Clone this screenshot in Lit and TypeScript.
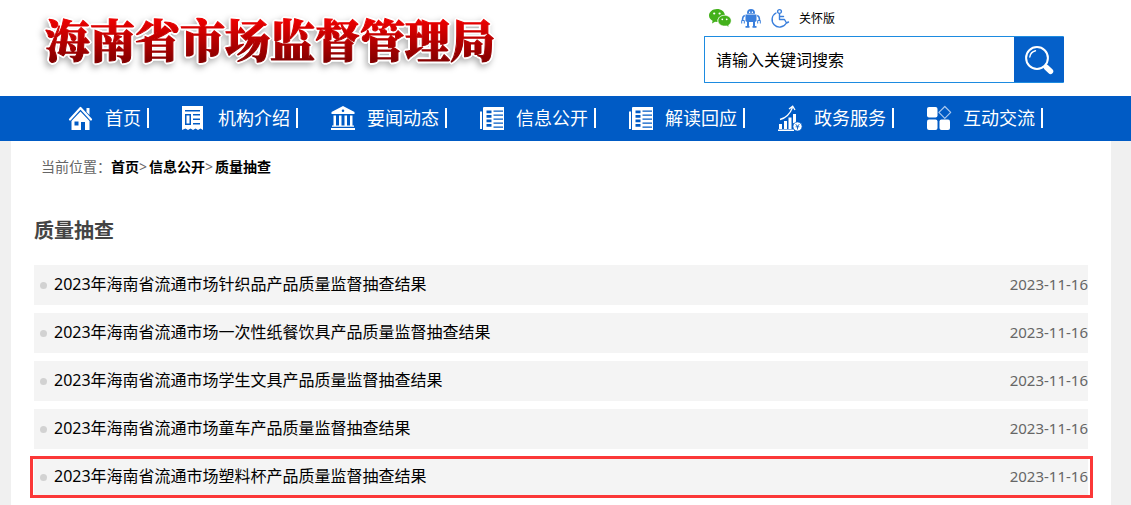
import { LitElement, html, css, svg } from "lit";
import { customElement } from "lit/decorators.js";

const newspaper = svg`
  <path d="M1 5.500h2V23H1z" fill="#fff"/>
  <path fill="#fff" fill-rule="evenodd" d="M5 1h20v23H4V2a1 1 0 0 1 1-1zM7.500 4.500v2.800h5V4.500zM7.500 9v2.800h5V9zM7.500 13.500v2.800h5v-2.800zM7.500 18v2.800h5V18zM14.500 4.500v1.200H24V4.500zM14.500 8.500v1.200H24V8.500zM14.500 12.500v1.200H24v-1.200zM14.500 16.500v1.200H24v-1.200zM14.500 20.500v1.200H24v-1.200z"/>`;

const icons = {
  home: svg`
    <path d="M2 13.500 12.500 2 23 13.500" fill="none" stroke="#fff" stroke-width="2.200" stroke-linecap="round" stroke-linejoin="round"/>
    <path d="M18.500 2h3v7l-3-3z" fill="#fff"/>
    <path fill="#fff" fill-rule="evenodd" d="M12.500 5.500 21.500 15v9H17v-8h-4v8H3.500v-9zM6.500 15.500v4h4v-4z"/>`,
  doc: svg`
    <path fill="#fff" fill-rule="evenodd" d="M1 0h21v24l-2.500-1.500L17 24l-2.500-1.500L12 24l-2.500-1.500L7 24l-2.500-1.500L1 24zM4 4v1.500h15V4zM4 8v11h6V8zM12 8v1.500h7V8zM12 12.500V14h7v-1.500zM12 17v1.500h7V17z"/>
    <path d="M5.500 9.500h3v8h-3z" fill="#fff"/>`,
  bank: svg`
    <path fill="#fff" fill-rule="evenodd" d="M13 0 24.500 6v2h-23V6zM13 3.500a1.300 1.300 0 1 0 0 2.600 1.300 1.300 0 0 0 0-2.600z"/>
    <path fill="#fff" d="M3.500 9.500H6V20H3.500zM9 9.500h2.500V20H9zM14.500 9.500H17V20h-2.500zM20 9.500h2.500V20H20zM2 19.500h22v1.200H2zM1 22h24v2H1z"/>`,
  news: newspaper,
  chart: svg`
    <path fill="#fff" d="M2 18h3v5H2zM7 15h3v8H7zM11.500 11.500h3V23h-3zM1 23.500h16V25H1z"/>
    <path fill="#fff" d="M16 8h3v9h-3z"/>
    <path d="M3 13.500C9 12 13 8 15.500 1.500M12 3 15.700.2 18 4" fill="none" stroke="#fff" stroke-width="1.300"/>
    <circle cx="20.500" cy="20.500" r="4.600" fill="#fff" stroke="#005bc5" stroke-width=".8"/>
    <path d="m18.700 18.200 1.800 2.200 1.800-2.200M18.700 20.800h3.600M20.500 20.500v3" fill="none" stroke="#005bc5" stroke-width="0.900"/>`,
  blocks: svg`
    <rect x="1" y="1" width="10.500" height="10.500" rx="2" fill="#fff"/>
    <rect x="1" y="13.500" width="10.500" height="10.500" rx="2" fill="#fff"/>
    <rect x="13.500" y="13.500" width="10.500" height="10.500" rx="2" fill="#fff"/>
    <path d="m18.800.5 5.900 5.900-5.900 5.900-5.900-5.900z" fill="none" stroke="#a9c8ee" stroke-width="1.200" stroke-linejoin="round"/>`,
};

const navItems = [
  { label: "首页", icon: icons.home },
  { label: "机构介绍", icon: icons.doc },
  { label: "要闻动态", icon: icons.bank },
  { label: "信息公开", icon: icons.news },
  { label: "解读回应", icon: icons.news },
  { label: "政务服务", icon: icons.chart },
  { label: "互动交流", icon: icons.blocks },
];

const results = [
  { title: "2023年海南省流通市场针织品产品质量监督抽查结果", date: "2023-11-16" },
  { title: "2023年海南省流通市场一次性纸餐饮具产品质量监督抽查结果", date: "2023-11-16" },
  { title: "2023年海南省流通市场学生文具产品质量监督抽查结果", date: "2023-11-16" },
  { title: "2023年海南省流通市场童车产品质量监督抽查结果", date: "2023-11-16" },
  { title: "2023年海南省流通市场塑料杯产品质量监督抽查结果", date: "2023-11-16", marked: true },
];

@customElement("app-root")
export class AppRoot extends LitElement {
  static styles = css`
    :host {
      display: block;
      min-height: 100vh;
      background: #f0f0f0;
      color: #000;
      font-family: "Noto Sans", "Noto Sans CJK SC", sans-serif;
      font-size: 16px;
    }
    * {
      box-sizing: border-box;
    }
    a {
      color: inherit;
      text-decoration: none;
    }
    svg {
      display: block;
      flex: none;
      overflow: visible;
    }
    .header {
      display: flex;
      justify-content: space-between;
      height: 96px;
      padding: 8px 67px 0 45px;
      background: #fff;
    }
    .brand {
      margin: 0;
      font-family: "Noto Serif CJK SC", "Noto Sans CJK SC", serif;
      font-size: 45px;
      font-weight: 900;
      line-height: 62px;
      white-space: nowrap;
      color: transparent;
      background: linear-gradient(#ee0000 18%, #860000 84%);
      background-clip: text;
      -webkit-background-clip: text;
      -webkit-text-stroke: 1px transparent;
      filter: drop-shadow(1px 1px 0 #fff) drop-shadow(-1px -1px 0 #fff) drop-shadow(1px -1px 0 #fff)
        drop-shadow(-1px 1px 0 #fff) drop-shadow(-2px 3px 3px rgba(0, 0, 0, 0.3));
      align-self: flex-start;
    }
    .tools {
      width: 360px;
    }
    .links {
      display: flex;
      align-items: center;
      gap: 10px;
      height: 20px;
      margin-bottom: 8px;
      padding-left: 5px;
      font-size: 12px;
    }
    .search {
      display: flex;
      height: 47px;
      border: 1px solid #1d8be0;
      border-radius: 1px;
      border-right: 0;
    }
    .field {
      flex: 1;
      min-width: 0;
      padding: 0 11px;
      border: 0;
      outline: 0;
      background: #fff;
      font: inherit;
      color: #000;
    }
    .field::placeholder {
      color: #000;
      opacity: 1;
    }
    .submit {
      display: flex;
      align-items: center;
      justify-content: center;
      width: 50px;
      padding: 0;
      border: 0;
      background: #0560c9;
      cursor: pointer;
    }
    .nav {
      display: flex;
      align-items: center;
      gap: 32px;
      height: 45px;
      padding: 0 0 1px 68px;
      background: #005bc5;
      color: #fff;
      font-size: 18px;
      line-height: 20px;
      white-space: nowrap;
    }
    .nav-item {
      display: flex;
      align-items: center;
      gap: 13px;
    }
    .nav-label {
      padding-right: 6px;
      border-right: 2px solid #fff;
    }
    .page {
      min-height: calc(100vh - 141px);
      margin: 0 20px 0 11px;
      padding: 16px 23px 8px;
      background: #fff;
    }
    .crumbs {
      display: flex;
      padding-left: 7px;
      font-size: 14px;
      line-height: 20px;
      color: #666;
    }
    .crumb {
      color: #000;
      font-weight: 700;
    }
    .separator {
      width: 10px;
    }
    .heading {
      margin: 39px 0 19px;
      font-size: 20px;
      font-weight: 700;
      line-height: 30px;
      color: #444;
    }
    .list {
      display: grid;
      gap: 8px;
      margin: 0;
      padding: 0;
      list-style: none;
    }
    .row {
      position: relative;
      display: flex;
      align-items: center;
      height: 40px;
      padding-left: 6px;
      background: #f4f4f4;
      line-height: 38px;
    }
    .dot {
      width: 7px;
      height: 7px;
      margin-right: 7px;
      border-radius: 50%;
      background: #d2d2d2;
    }
    .title {
      flex: 1;
      padding-bottom: 2px;
    }
    .date {
      padding-bottom: 2px;
      font-size: 15px;
      color: #666;
    }
    .marked::after {
      content: "";
      position: absolute;
      inset: -1px -5px -1px -4px;
      border: 3px solid #fb3838;
      pointer-events: none;
    }
  `;

  render() {
    return html`
      <header class="header">
        <h1 class="brand">海南省市场监督管理局</h1>
        <div class="tools">
          <div class="links">
            <a href="#" aria-label="微信">
              <svg width="22" height="18" viewBox="0 0 22 18">
                <path fill="#43b11b" d="M8 0c4.300 0 7.600 2.600 7.900 6-4.200 0-7.400 2.500-7.400 5.800l.1 1.200-2.600-.3L3 14.500l.6-2.700C1.400 10.700 0 8.900 0 6.600 0 2.900 3.500 0 8 0z"/>
                <path fill="#43b11b" stroke="#fff" stroke-width=".6" d="M15.500 6.300c3.800 0 6.700 2.400 6.700 5.500 0 1.800-1 3.300-2.600 4.300l.5 1.900-2.300-1.100c-4.700.8-8.800-1.500-8.800-5.100 0-3.100 2.700-5.500 6.500-5.500z"/>
                <g fill="#fff"><circle cx="5.200" cy="4.500" r="1.100"/><circle cx="10.600" cy="4.500" r="1.100"/><circle cx="13.300" cy="10.300" r=".9"/><circle cx="17.700" cy="10.300" r=".9"/></g>
              </svg>
            </a>
            <a href="#" aria-label="智能问答">
              <svg width="20" height="19" viewBox="0 0 20 19">
                <path fill="#3a7fdc" fill-rule="evenodd" d="M6 4.800V4a4 4 0 0 1 8 0v.8zM8 2.600v1.300h1.200V2.600zM10.800 2.600v1.300H12V2.600z"/>
                <path fill="#3a7fdc" d="M4.500 5.500h11v6.500l-1.500 1H6l-1.500-1z"/>
                <path d="M3.800 6.500C2 7 1.500 8.500 1.500 11.500M16.200 6.500c1.800.5 2.300 2 2.300 5" fill="none" stroke="#3a7fdc" stroke-width="1.600"/>
                <path d="M.7 14.500v-3h2.600v3M16.700 14.500v-3h2.600v3" fill="none" stroke="#3a7fdc" stroke-width="1"/>
                <path d="M7 13v4.200M13 13v4.200" stroke="#3a7fdc" stroke-width="2"/>
                <path d="M4.500 17.800h4M11.500 17.800h4" stroke="#3a7fdc" stroke-width="1.800"/>
              </svg>
            </a>
            <a href="#" aria-label="无障碍">
              <svg width="18" height="19" viewBox="0 0 18 19">
                <g fill="none" stroke="#3a7fdc" stroke-width="1.400" stroke-linecap="round" stroke-linejoin="round">
                  <circle cx="8.500" cy="2.500" r="1.900"/>
                  <path d="M5 4A7.500 7.500 0 1 0 15 14.500M8.500 4.800V10.500h5l2 3.500 2-1M8.500 7.500h4"/>
                </g>
              </svg>
            </a>
            <a href="#">关怀版</a>
          </div>
          <form class="search" role="search" @submit=${(e: Event) => e.preventDefault()}>
            <input class="field" type="text" aria-label="搜索" placeholder="请输入关键词搜索" />
            <button class="submit" type="submit" aria-label="搜索">
              <svg width="30" height="30" viewBox="0 0 30 30">
                <circle cx="13" cy="13" r="10.900" fill="none" stroke="#fff" stroke-width="2"/>
                <path d="M5.800 12A7.500 7.500 0 0 1 11.500 5.800" fill="none" stroke="#fff" stroke-width="1.400" stroke-linecap="round"/>
                <path d="m20.500 20.500 2 2" stroke="#fff" stroke-width="3"/>
                <path d="m22.500 22.500 4 3.800" stroke="#fff" stroke-width="5.500" stroke-linecap="round"/>
              </svg>
            </button>
          </form>
        </div>
      </header>
      <nav class="nav">
        ${navItems.map(
          (item) => html`
            <a class="nav-item" href="#">
              <svg width="24" height="24" viewBox="0 0 24 24" aria-hidden="true">${item.icon}</svg>
              <span class="nav-label">${item.label}</span>
            </a>
          `
        )}
      </nav>
      <main class="page">
        <div class="crumbs">
          <span>当前位置：</span>
          <a class="crumb" href="#">首页</a><span class="separator">&gt;</span>
          <a class="crumb" href="#">信息公开</a><span class="separator">&gt;</span>
          <a class="crumb" href="#">质量抽查</a>
        </div>
        <h2 class="heading">质量抽查</h2>
        <ul class="list">
          ${results.map(
            (r) => html`
              <li class="row ${r.marked ? "marked" : ""}">
                <span class="dot"></span>
                <a class="title" href="#">${r.title}</a>
                <time class="date" datetime=${r.date}>${r.date}</time>
              </li>
            `
          )}
        </ul>
      </main>
    `;
  }
}
